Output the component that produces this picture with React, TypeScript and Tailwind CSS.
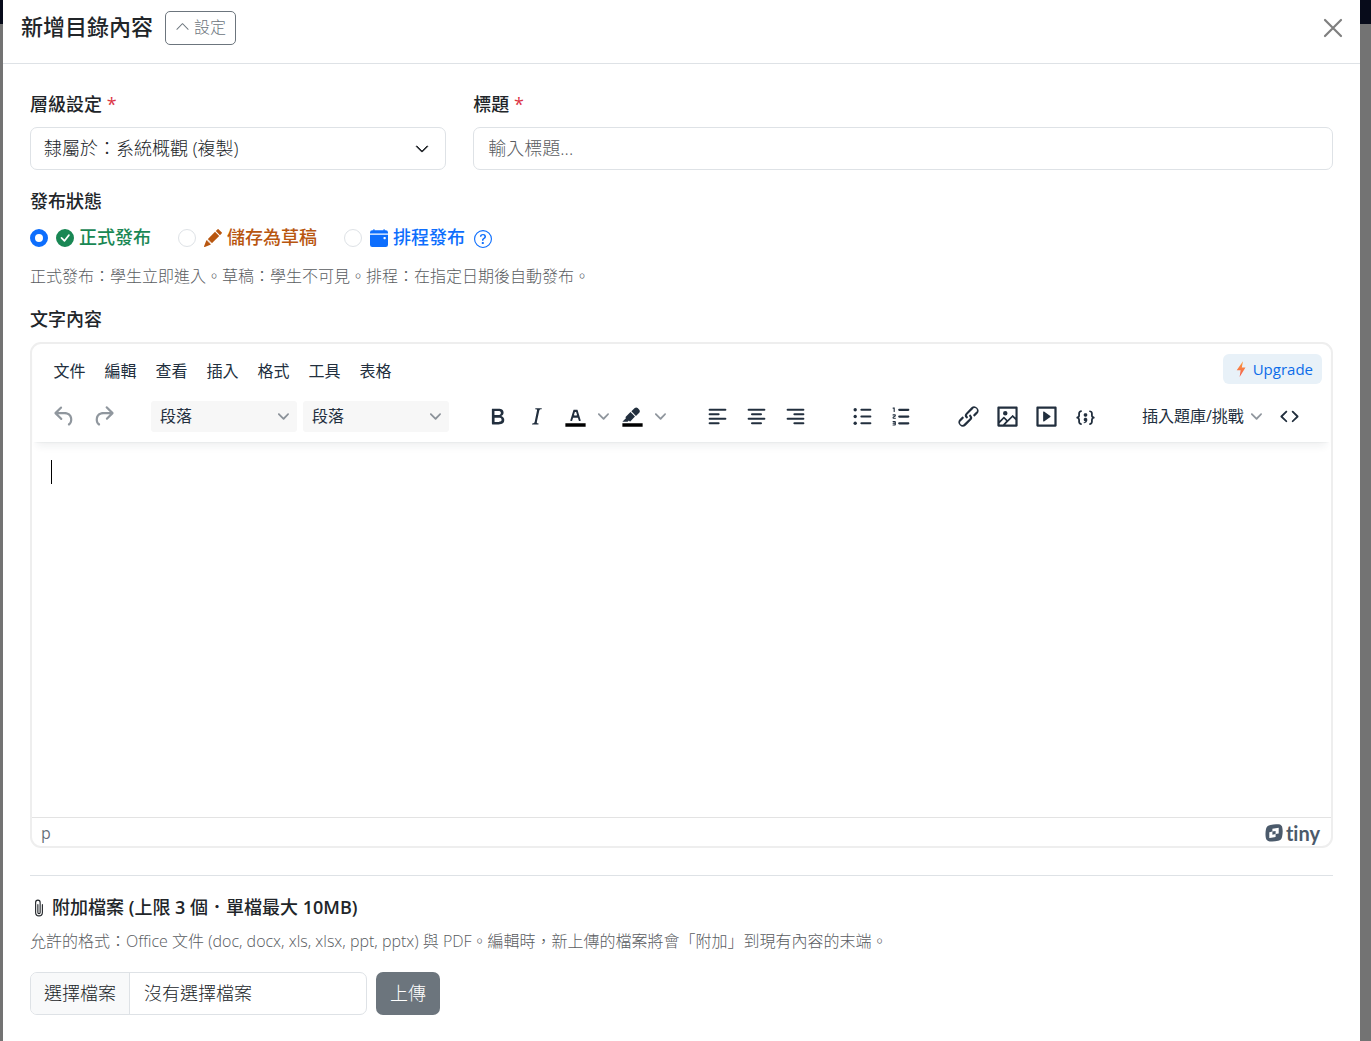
import { useState, type ReactNode } from "react";
import {
  BsCalendarEventFill,
  BsCheckCircleFill,
  BsChevronDown,
  BsChevronUp,
  BsPaperclip,
  BsPencilFill,
  BsQuestionCircle,
} from "react-icons/bs";

const icons = {
  undo: "M6.4 8H12c3.7 0 6.2 2 6.8 5.1.6 2.7-.4 5.6-2.3 6.8a1 1 0 0 1-1-1.8c1.1-.6 1.8-2.7 1.4-4.6-.5-2.1-2.1-3.5-4.9-3.5H6.4l3.3 3.3a1 1 0 1 1-1.4 1.4l-5-5a1 1 0 0 1 0-1.4l5-5a1 1 0 0 1 1.4 1.4L6.4 8Z",
  redo: "M17.6 10H12c-2.8 0-4.4 1.4-4.9 3.5-.4 2 .3 4 1.4 4.6a1 1 0 1 1-1 1.8c-2-1.2-2.9-4.1-2.3-6.8.6-3 3-5.1 6.8-5.1h5.6l-3.3-3.3a1 1 0 1 1 1.4-1.4l5 5a1 1 0 0 1 0 1.4l-5 5a1 1 0 0 1-1.4-1.4l3.3-3.3Z",
  bold: "M7.8 19c-.3 0-.5 0-.6-.2l-.2-.5V5.7c0-.2 0-.4.2-.5l.6-.2h5c1.5 0 2.7.3 3.5 1 .7.6 1.1 1.4 1.1 2.5a3 3 0 0 1-.6 1.9c-.4.6-1 1-1.6 1.2.4.1.9.3 1.3.6s.8.7 1 1.2c.4.4.5 1 .5 1.6 0 1.3-.4 2.3-1.3 3-.8.7-2.1 1-3.8 1H7.8Zm5-8.3c.6 0 1.2-.1 1.6-.5.4-.3.6-.7.6-1.3 0-1.1-.8-1.7-2.3-1.7H9.3v3.5h3.4Zm.5 6c.7 0 1.3-.1 1.7-.4.4-.4.6-.9.6-1.5s-.2-1-.7-1.4c-.4-.3-1-.4-2-.4H9.4v3.8h4Z",
  italic: "m16.7 4.7-.1.9h-.3c-.6 0-1 0-1.4.3-.3.3-.4.6-.5 1.1l-2.1 9.8v.6c0 .5.4.8 1.4.8h.2l-.2.8H8l.2-.8h.2c1.1 0 1.8-.5 2-1.5l2-9.8.1-.5c0-.6-.4-.8-1.4-.8h-.3l.2-.9h5.8Z",
  ol: "M10 17h8c.6 0 1 .4 1 1s-.4 1-1 1h-8a1 1 0 0 1 0-2Zm0-6h8c.6 0 1 .4 1 1s-.4 1-1 1h-8a1 1 0 0 1 0-2Zm0-6h8c.6 0 1 .4 1 1s-.4 1-1 1h-8a1 1 0 1 1 0-2ZM6 4v3.5c0 .3-.2.5-.5.5a.5.5 0 0 1-.5-.5V5h-.5a.5.5 0 0 1 0-1H6Zm-1 8.8.2.2h1.3c.3 0 .5.2.5.5s-.2.5-.5.5H4.9a1 1 0 0 1-.9-1V13c0-.4.3-.8.6-1l1.2-.4.2-.3a.2.2 0 0 0-.2-.2H4.5a.5.5 0 0 1-.5-.5c0-.3.2-.5.5-.5h1.6c.5 0 .9.4.9 1v.1c0 .4-.3.8-.6 1l-1.2.4-.2.3ZM7 17v2c0 .6-.4 1-1 1H4.5a.5.5 0 0 1 0-1h1.2c.2 0 .3-.1.3-.3 0-.2-.1-.3-.3-.3H4.4a.4.4 0 1 1 0-.8h1.3c.2 0 .3-.1.3-.3 0-.2-.1-.3-.3-.3H4.5a.5.5 0 1 1 0-1H6c.6 0 1 .4 1 1Z",
  link: "M6.2 12.3a1 1 0 0 1 1.4 1.4l-2 2a2 2 0 1 0 2.6 2.8l4.8-4.8a1 1 0 0 0 0-1.4 1 1 0 1 1 1.4-1.3 2.9 2.9 0 0 1 0 4L9.6 20a3.9 3.9 0 0 1-5.5-5.5l2-2Zm11.6-.6a1 1 0 0 1-1.4-1.4l2-2a2 2 0 1 0-2.6-2.8L11 10.3a1 1 0 0 0 0 1.4A1 1 0 1 1 9.6 13a2.9 2.9 0 0 1 0-4L14.4 4a3.9 3.9 0 0 1 5.5 5.5l-2 2Z",
  image: "m5 15.7 3.3-3.2c.3-.3.7-.3 1 0L12 15l4.1-4c.3-.4.8-.4 1 0l2 1.9V5H5v10.7ZM5 18V19h3l2.8-2.9-2-2L5 17.9Zm14-3-2.5-2.4-6.4 6.5H19v-4ZM4 3h16c.6 0 1 .4 1 1v16c0 .6-.4 1-1 1H4a1 1 0 0 1-1-1V4c0-.6.4-1 1-1Zm6 8a2 2 0 1 0 0-4 2 2 0 0 0 0 4Z",
  media: "M4 3h16c.6 0 1 .4 1 1v16c0 .6-.4 1-1 1H4a1 1 0 0 1-1-1V4c0-.6.4-1 1-1Zm1 2v14h14V5H5Zm4.8 2.6 5.6 4a.5.5 0 0 1 0 .8l-5.6 4A.5.5 0 0 1 9 16V8a.5.5 0 0 1 .8-.4Z",
  sample: "M7.1 11a2.8 2.8 0 0 1-.8 2 2.8 2.8 0 0 1 .8 2v1.7c0 .3.1.6.4.8.2.3.5.4.8.4.3 0 .4.2.4.4v.8c0 .2-.1.4-.4.4-.7 0-1.4-.3-2-.8-.5-.6-.8-1.3-.8-2V15c0-.3-.1-.6-.4-.8-.2-.3-.5-.4-.8-.4a.4.4 0 0 1-.4-.4v-.8c0-.2.2-.4.4-.4.3 0 .6-.1.8-.4.3-.2.4-.5.4-.8V9.3c0-.7.3-1.4.8-2 .6-.5 1.3-.8 2-.8.3 0 .4.2.4.4v.8c0 .2-.1.4-.4.4-.3 0-.6.1-.8.4-.3.2-.4.5-.4.8V11Zm9.8 0V9.3c0-.3-.1-.6-.4-.8-.2-.3-.5-.4-.8-.4a.4.4 0 0 1-.4-.4V7c0-.2.1-.4.4-.4.7 0 1.4.3 2 .8.5.6.8 1.3.8 2V11c0 .3.1.6.4.8.2.3.5.4.8.4.2 0 .4.2.4.4v.8c0 .2-.2.4-.4.4-.3 0-.6.1-.8.4-.3.2-.4.5-.4.8v1.7c0 .7-.3 1.4-.8 2-.6.5-1.3.8-2 .8a.4.4 0 0 1-.4-.4v-.8c0-.2.1-.4.4-.4.3 0 .6-.1.8-.4.3-.2.4-.5.4-.8V15a2.8 2.8 0 0 1 .8-2 2.8 2.8 0 0 1-.8-2Zm-3.3-.4c0 .4-.1.8-.5 1.1-.3.3-.7.5-1.1.5-.4 0-.8-.2-1.1-.5-.4-.3-.5-.7-.5-1.1 0-.5.1-.9.5-1.2.3-.3.7-.4 1.1-.4.4 0 .8.1 1.1.4.4.3.5.7.5 1.2ZM12 13c.4 0 .8.1 1.1.5.4.3.5.7.5 1.1 0 1-.1 1.6-.5 2a3 3 0 0 1-1.1 1c-.4.3-.8.4-1.1.4a.5.5 0 0 1-.5-.5V17a3 3 0 0 0 1-.2l.6-.6c-.6 0-1-.2-1.3-.5-.2-.3-.3-.7-.3-1 0-.5.1-1 .5-1.2.3-.4.7-.5 1.1-.5Z",
  code: "M9.8 15.7c.3.3.3.8 0 1-.3.4-.9.4-1.2 0l-4.4-4.1a.8.8 0 0 1 0-1.2l4.4-4.2c.3-.3.9-.3 1.2 0 .3.3.3.8 0 1.1L6 12l3.8 3.7ZM14.2 15.7c-.3.3-.3.8 0 1 .4.4.9.4 1.2 0l4.4-4.1c.3-.3.3-.9 0-1.2l-4.4-4.2a.8.8 0 0 0-1.2 0c-.3.3-.3.8 0 1.1L18 12l-3.8 3.7Z",
};

const menus = ["文件", "編輯", "查看", "插入", "格式", "工具", "表格"];

function Glyph({ d }: { d: string }) {
  return (
    <svg viewBox="0 0 24 24" className="size-[27px] fill-current" aria-hidden="true">
      <path fillRule="evenodd" d={d} />
    </svg>
  );
}

function Lines({ d, dots }: { d: string; dots?: boolean }) {
  return (
    <svg viewBox="0 0 24 24" className="size-[27px]" fill="currentColor" stroke="currentColor" strokeWidth="1.8" strokeLinecap="round" aria-hidden="true">
      <path d={d} />
      {dots && (
        <g stroke="none">
          <circle cx="5.5" cy="6" r="1.5" />
          <circle cx="5.5" cy="12" r="1.5" />
          <circle cx="5.5" cy="18" r="1.5" />
        </g>
      )}
    </svg>
  );
}

function Chevron() {
  return (
    <svg viewBox="0 0 10 10" className="size-[11px] shrink-0 fill-[#222f3e] opacity-50" aria-hidden="true">
      <path d="M8.7 2.2c.3-.3.8-.3 1 0 .4.4.4.9 0 1.2L5.7 7.8c-.3.3-.9.3-1.2 0L.2 3.4a.8.8 0 0 1 0-1.2c.3-.3.8-.3 1.1 0L5 6l3.7-3.8Z" />
    </svg>
  );
}

function Tool({ label, muted, children }: { label: string; muted?: boolean; children: ReactNode }) {
  return (
    <button
      type="button"
      aria-label={label}
      className={`flex h-8 w-[38px] items-center justify-center ${muted ? "text-[#222f3e]/50" : "text-[#222f3e]"}`}
    >
      {children}
    </button>
  );
}

function SplitTool({ label, children }: { label: string; children: ReactNode }) {
  return (
    <div className="flex">
      <Tool label={label}>{children}</Tool>
      <button type="button" aria-label={`${label}選單`} className="flex h-8 w-[18px] items-center justify-center">
        <Chevron />
      </button>
    </div>
  );
}

function FormatSelect({ label }: { label: string }) {
  return (
    <button type="button" aria-label={label} className="flex h-[31px] w-[146px] items-center justify-between rounded-[3px] bg-[#f7f7f7] pr-2 pl-[9px]">
      段落
      <Chevron />
    </button>
  );
}

function Editor() {
  return (
    <div className="flex flex-col overflow-hidden rounded-[11px] border-2 border-[#eee] text-base text-[#222f3e]">
      <div className="relative z-10 mx-px h-[98px] shadow-[0_2px_2px_-2px_rgba(34,47,62,.1),0_8px_8px_-4px_rgba(34,47,62,.07)]">
        <div className="flex items-center justify-between pt-[9px] pr-2 pl-[11px]">
          <div role="menubar" className="flex">
            {menus.map((m) => (
              <button key={m} type="button" role="menuitem" className="h-8 w-[51px] pt-1">
                {m}
              </button>
            ))}
          </div>
          <a href="#upgrade" className="flex h-[30px] items-center gap-[3px] rounded-md bg-[#e8f1f8] px-[9px] text-[15px] text-[#0c6ce9]">
            <svg viewBox="0 0 18 18" className="size-[18px]" aria-hidden="true">
              <defs>
                <linearGradient id="bolt" x1="0" y1="0" x2="0" y2="1">
                  <stop offset="0" stopColor="#fc9d38" />
                  <stop offset="1" stopColor="#f35a53" />
                </linearGradient>
              </defs>
              <path fill="url(#bolt)" d="M11 1.200 4.700 10.200H8.600L7.600 17 13.500 7.600H9.800Z" />
            </svg>
            Upgrade
          </a>
        </div>
        <div role="toolbar" aria-label="格式工具列" className="mt-[15px] flex items-center gap-[29px] pl-3">
          <div className="flex gap-px">
            <Tool label="復原" muted>
              <Glyph d={icons.undo} />
            </Tool>
            <Tool label="重做" muted>
              <Glyph d={icons.redo} />
            </Tool>
          </div>
          <div className="flex gap-1.5">
            <FormatSelect label="區塊" />
            <FormatSelect label="樣式" />
          </div>
          <div className="flex gap-px">
            <Tool label="粗體">
              <Glyph d={icons.bold} />
            </Tool>
            <Tool label="斜體">
              <Glyph d={icons.italic} />
            </Tool>
            <SplitTool label="文字顏色">
              <svg viewBox="0 0 24 24" className="size-[27px] fill-current" aria-hidden="true">
                <path fill="#000" d="M3 18h18v3H3z" />
                <path
                  fillRule="evenodd"
                  d="M8.7 16h-.8a.5.5 0 0 1-.5-.6l2.7-9c.1-.3.3-.4.5-.4h2.8c.2 0 .4.1.5.4l2.7 9a.5.5 0 0 1-.5.6h-.8a.5.5 0 0 1-.4-.4l-.7-2.2c0-.3-.3-.4-.5-.4h-3.4c-.2 0-.4.1-.5.4l-.7 2.2c0 .3-.2.4-.4.4Zm2.6-7.6-.6 2a.5.5 0 0 0 .5.6h1.6a.5.5 0 0 0 .5-.6l-.6-2c0-.3-.3-.4-.5-.4h-.4c-.2 0-.4.1-.5.4Z"
                />
              </svg>
            </SplitTool>
            <SplitTool label="背景顏色">
              <svg viewBox="0 0 24 24" className="size-[27px] fill-current" aria-hidden="true">
                <path fill="#000" d="M3 18h18v3H3z" />
                <path d="M7.7 16.7H3l3.3-3.3-.7-.8L10.2 8l4 4.1-4 4.2c-.2.2-.6.2-.8 0l-.6-.7-1.1 1.1Zm5-7.5L11 7.4l3-2.9a2 2 0 0 1 2.6 0L18 6c.7.7.7 2 0 2.7l-2.9 2.9-1.8-1.8-.5-.6Z" />
              </svg>
            </SplitTool>
          </div>
          <div className="flex gap-px">
            <Tool label="靠左對齊">
              <Lines d="M5 6h14M5 10h8M5 14h14M5 18h8" />
            </Tool>
            <Tool label="置中對齊">
              <Lines d="M5 6h14M8 10h8M5 14h14M8 18h8" />
            </Tool>
            <Tool label="靠右對齊">
              <Lines d="M5 6h14M11 10h8M5 14h14M11 18h8" />
            </Tool>
          </div>
          <div className="flex gap-px">
            <Tool label="項目符號清單">
              <Lines d="M11 6h8M11 12h8M11 18h8" dots />
            </Tool>
            <Tool label="編號清單">
              <Glyph d={icons.ol} />
            </Tool>
          </div>
          <div className="flex gap-px">
            <Tool label="連結">
              <Glyph d={icons.link} />
            </Tool>
            <Tool label="圖片">
              <Glyph d={icons.image} />
            </Tool>
            <Tool label="媒體">
              <Glyph d={icons.media} />
            </Tool>
            <Tool label="程式碼範例">
              <Glyph d={icons.sample} />
            </Tool>
          </div>
          <div className="flex gap-px">
            <button type="button" className="flex h-8 items-center gap-[7px] pr-2 pl-[9px] whitespace-nowrap">
              插入題庫/挑戰
              <Chevron />
            </button>
            <Tool label="原始碼">
              <Glyph d={icons.code} />
            </Tool>
          </div>
        </div>
      </div>
      <div role="textbox" aria-multiline="true" aria-labelledby="content-label" tabIndex={0} className="min-h-[375px] px-[19px] py-[18px] outline-none">
        <span className="block h-6 w-px bg-black" />
      </div>
      <div className="flex h-[29px] items-center justify-between border-t border-[#e3e3e3] pt-px pr-[11px] pl-[9px] text-[#222f3e]/70">
        <span>p</span>
        <a href="#tiny" className="flex items-center gap-[3px] text-[#4b5a6b]">
          <svg viewBox="0 0 18 18" className="size-[18px]" aria-hidden="true">
            <path
              fill="currentColor"
              fillRule="evenodd"
              d="M5.500 .9C8.500 .1 11 0 13.500 .3A4.300 4.300 0 0 1 17.400 4.200c.5 3 .3 5.600-.3 8.600a5 5 0 0 1-3.900 4c-3 .7-5.700.9-8.500.6A4.300 4.300 0 0 1 .8 13.800C.3 10.800.4 8 1 5A5 5 0 0 1 5.500 .9ZM7.400 4.700v2.900L4.300 8.200v5.900l6.300-1V10.100l3.100-.6V3.700ZM7.400 7.600l3.200-.5V10.100l-3.200.6Z"
            />
          </svg>
          <span className="font-['Lato'] text-xl/6 font-bold [font-variant-ligatures:none]">tiny</span>
        </a>
      </div>
    </div>
  );
}

const statuses = [
  { id: "publish", text: "正式發布", color: "text-[#198754]", Icon: BsCheckCircleFill },
  { id: "draft", text: "儲存為草稿", color: "text-[#b8560f]", Icon: BsPencilFill },
  { id: "schedule", text: "排程發布", color: "text-[#0d6efd]", Icon: BsCalendarEventFill },
];

export default function App() {
  const [status, setStatus] = useState("publish");
  return (
    <div className="relative min-h-screen bg-[#737373] font-['Open_Sans','Noto_Sans_CJK_TC',sans-serif] text-lg/[27px] text-[#212529]">
      <div className="absolute inset-x-0 top-0 h-6 bg-[#070b1a]" />
      <div role="dialog" aria-labelledby="dialog-title" className="relative mr-[11px] ml-[3px] min-h-screen bg-white">
        <header className="flex items-center justify-between border-b border-[#dee2e6] pt-[11px] pr-[17px] pb-[18px] pl-[18px]">
          <div className="flex items-start gap-3">
            <h1 id="dialog-title" className="text-[22px]/[30px] font-medium">
              新增目錄內容
            </h1>
            <button type="button" className="flex h-[34px] items-center gap-1 rounded-[5px] border border-[#6c757d] px-[9px] pb-[3px] text-base font-light text-[#6c757d]">
              <BsChevronUp className="size-[15px]" />
              設定
            </button>
          </div>
          <button type="button" aria-label="關閉" className="text-[#7f7f7f]">
            <svg viewBox="0 0 20 20" className="size-5" fill="none" stroke="currentColor" strokeWidth="2.2" strokeLinecap="round" aria-hidden="true">
              <path d="M2 2 18 18M18 2 2 18" />
            </svg>
          </button>
        </header>

        <main className="px-[27px] pt-[27px] pb-[26px]">
          <div className="grid grid-cols-3 gap-[27px]">
            <div>
              <label htmlFor="parent" className="block font-medium">
                層級設定 <span className="text-[#dc3545]">*</span>
              </label>
              <div className="relative mt-[9px]">
                <select id="parent" className="h-[43px] w-full appearance-none rounded-[7px] border border-[#dee2e6] bg-white px-[13px] font-light">
                  <option>隸屬於：系統概觀 (複製)</option>
                </select>
                <BsChevronDown className="pointer-events-none absolute top-[15px] right-[17px] size-[14px] stroke-1" />
              </div>
            </div>
            <div className="col-span-2">
              <label htmlFor="title" className="block font-medium">
                標題 <span className="text-[#dc3545]">*</span>
              </label>
              <input
                id="title"
                type="text"
                placeholder="輸入標題..."
                className="mt-[9px] h-[43px] w-full rounded-[7px] border border-[#dee2e6] px-[14px] pb-0.5 font-light placeholder:text-[#595c5f]"
              />
            </div>
          </div>

          <fieldset className="mt-[18px]">
            <legend className="font-medium">發布狀態</legend>
            <div className="mt-[9px] flex items-center gap-[27px]">
              {statuses.map(({ id, text, color, Icon }) => (
                <div key={id} className="flex items-center gap-[9px]">
                  <div className="flex items-center gap-2">
                    <input
                      id={id}
                      type="radio"
                      name="status"
                      checked={status === id}
                      onChange={() => setStatus(id)}
                      className="size-[18px] appearance-none rounded-full border border-[#dee2e6] bg-white checked:border-5 checked:border-[#0d6efd]"
                    />
                    <label htmlFor={id} className={`flex items-center gap-[5px] font-medium ${color}`}>
                      <Icon className="size-[18px]" />
                      {text}
                    </label>
                  </div>
                  {id === "schedule" && (
                    <button type="button" aria-label="說明" className="pt-[3px] text-[#0d6efd]">
                      <BsQuestionCircle className="size-[18px]" />
                    </button>
                  )}
                </div>
              ))}
            </div>
            <p className="mt-[13px] text-base/6 font-light text-[#595c5f]">
              正式發布：學生立即進入。草稿：學生不可見。排程：在指定日期後自動發布。
            </p>
          </fieldset>

          <div className="mt-[18px]">
            <div id="content-label" className="mb-[9px] font-medium">
              文字內容
            </div>
            <Editor />
          </div>

          <hr className="mt-[27px] mb-[18px] border-[#dee2e6]" />

          <section>
            <h2 className="flex items-center gap-1 font-medium">
              <BsPaperclip className="size-[18px]" />
              <span>
                附加檔案 <span className="font-semibold">(</span>上限 <span className="font-semibold">3</span> 個．單檔最大{" "}
                <span className="font-semibold">10MB)</span>
              </span>
            </h2>
            <p className="mt-2 text-base/6 font-light text-[#595c5f]">
              允許的格式：Office 文件 (doc, docx, xls, xlsx, ppt, pptx) 與 PDF。編輯時，新上傳的檔案將會「附加」到現有內容的末端。
            </p>
            <div className="mt-[18px] flex gap-[9px] pt-px font-light">
              <label htmlFor="file" className="flex h-[43px] w-[337px] items-stretch overflow-hidden rounded-[7px] border border-[#dee2e6]">
                <input id="file" type="file" className="sr-only" />
                <span className="flex items-center border-r border-[#dee2e6] bg-[#f8f9fa] px-[13px]">選擇檔案</span>
                <span className="flex items-center px-[14px]">沒有選擇檔案</span>
              </label>
              <button type="button" className="h-[43px] rounded-[7px] bg-[#6c757d] px-[14px] text-white">
                上傳
              </button>
            </div>
          </section>
        </main>
      </div>
    </div>
  );
}
